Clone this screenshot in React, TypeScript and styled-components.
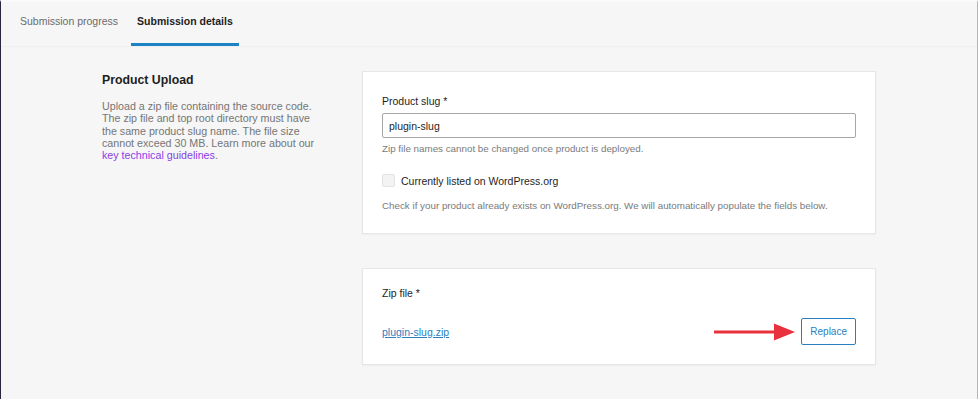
import { FC } from "react";
import styled, { createGlobalStyle } from "styled-components";

const GlobalStyle = createGlobalStyle`
    html, body {
        margin: 0;
        padding: 0;
        background: #f6f6f6;
    }
    body {
        font-family: "Liberation Sans", Arial, sans-serif;
        color: #1e1e1e;
    }
`;

const RightArrow: FC = () => (
    <svg width="82" height="18" viewBox="0 0 82 18">
        <rect x="0" y="7.5" width="64" height="3" fill="#e8313c" />
        <polygon points="60,0.5 81,9 60,17.5" fill="#e8313c" />
    </svg>
);

export default function App() {
    return <Frame>
        <GlobalStyle />
        <Tabs>
            <Tab>Submission progress</Tab>
            <Tab active>Submission details</Tab>
        </Tabs>
        <Content>
            <Intro>
                <Heading>Product Upload</Heading>
                <Description>
                    Upload a zip file containing the source code. The zip file and top root directory must have
                    the same product slug name. The file size cannot exceed 30 MB. Learn more about our{" "}
                    <GuideLink href="#">key technical guidelines</GuideLink>.
                </Description>
            </Intro>
            <Cards>
                <Card>
                    <Label>Product slug *</Label>
                    <Input defaultValue="plugin-slug" />
                    <Help tight>Zip file names cannot be changed once product is deployed.</Help>
                    <CheckRow>
                        <Checkbox type="checkbox" />
                        <CheckLabel>Currently listed on WordPress.org</CheckLabel>
                    </CheckRow>
                    <Help>Check if your product already exists on WordPress.org. We will automatically populate the fields below.</Help>
                </Card>
                <Card compact>
                    <Label>Zip file *</Label>
                    <FileRow>
                        <FileLink href="#">plugin-slug.zip</FileLink>
                        <Actions>
                            <RightArrow />
                            <ReplaceButton>Replace</ReplaceButton>
                        </Actions>
                    </FileRow>
                </Card>
            </Cards>
        </Content>
    </Frame>
}

const Frame = styled.div`
    height: 399px;
    box-sizing: border-box;
    border-left: 1px solid #2d2440;
    border-right: 1px solid #b5b5b5;
    border-top: 2px solid #fafafa;
    background: #f6f6f6;
    overflow: hidden;
`;

const Tabs = styled.div`
    display: flex;
    height: 44px;
    padding-left: 13px;
    gap: 7px;
    border-bottom: 1px solid #efefef;
`;

const Tab = styled.div<{ active?: boolean }>`
    display: flex;
    align-items: center;
    padding: 0 6px 4px;
    font-size: 10.5px;
    color: ${props => props.active ? "#1e1e1e" : "#6b6b6b"};
    font-weight: ${props => props.active ? 700 : 400};
    border-bottom: 3px solid ${props => props.active ? "#1b83c4" : "transparent"};
`;

const Content = styled.div`
    display: grid;
    grid-template-columns: 240px 514px;
    column-gap: 20px;
    padding: 24px 0 0 101px;
`;

const Intro = styled.div`
    padding-top: 2px;
`;

const Heading = styled.h2`
    margin: 0 0 13px;
    font-size: 12.3px;
    font-weight: 700;
    color: #1e1e1e;
`;

const Description = styled.p`
    margin: 0;
    width: 222px;
    font-size: 10.7px;
    line-height: 12.3px;
    color: #757575;
`;

const GuideLink = styled.a`
    color: #8a3ee8;
    text-decoration: none;
`;

const Cards = styled.div`
    display: flex;
    flex-direction: column;
    gap: 34px;
`;

const Card = styled.div<{ compact?: boolean }>`
    background: #ffffff;
    border: 1px solid #e6e6e6;
    box-shadow: 0 1px 2px rgba(0, 0, 0, 0.04);
    padding: ${props => props.compact ? "18px 19px 19px" : "23px 19px 22px"};
`;

const Label = styled.div`
    font-size: 10.5px;
    color: #1e1e1e;
    margin-bottom: 6px;
`;

const Input = styled.input`
    display: block;
    box-sizing: border-box;
    width: 100%;
    height: 25px;
    padding: 0 6px;
    border: 1px solid #a7a7a7;
    border-radius: 2px;
    font-family: "Liberation Sans", Arial, sans-serif;
    font-size: 10.5px;
    color: #1e1e1e;
    outline: none;
`;

const Help = styled.div<{ tight?: boolean }>`
    font-size: 9.8px;
    color: #7a7a7a;
    margin-top: ${props => props.tight ? 5 : 7}px;
`;

const CheckRow = styled.label`
    display: flex;
    align-items: center;
    gap: 6px;
    margin-top: 20px;
    margin-bottom: 13px;
`;

const Checkbox = styled.input`
    appearance: none;
    margin: 0;
    width: 13px;
    height: 13px;
    border: 1px solid #e2e2e2;
    border-radius: 2px;
    background: #f3f3f3;
`;

const CheckLabel = styled.span`
    font-size: 10.5px;
    color: #1e1e1e;
`;

const FileRow = styled.div`
    display: flex;
    align-items: center;
    justify-content: space-between;
    margin-top: 19px;
`;

const FileLink = styled.a`
    font-size: 10.5px;
    color: #2a7fc0;
    text-decoration: underline;
`;

const Actions = styled.div`
    display: flex;
    align-items: center;
    gap: 5px;
`;

const ReplaceButton = styled.button`
    height: 27px;
    padding: 0 8px;
    background: #ffffff;
    border: 1px solid #2a7fc0;
    border-radius: 2px;
    font-family: "Liberation Sans", Arial, sans-serif;
    font-size: 10px;
    color: #2a7fc0;
`;
